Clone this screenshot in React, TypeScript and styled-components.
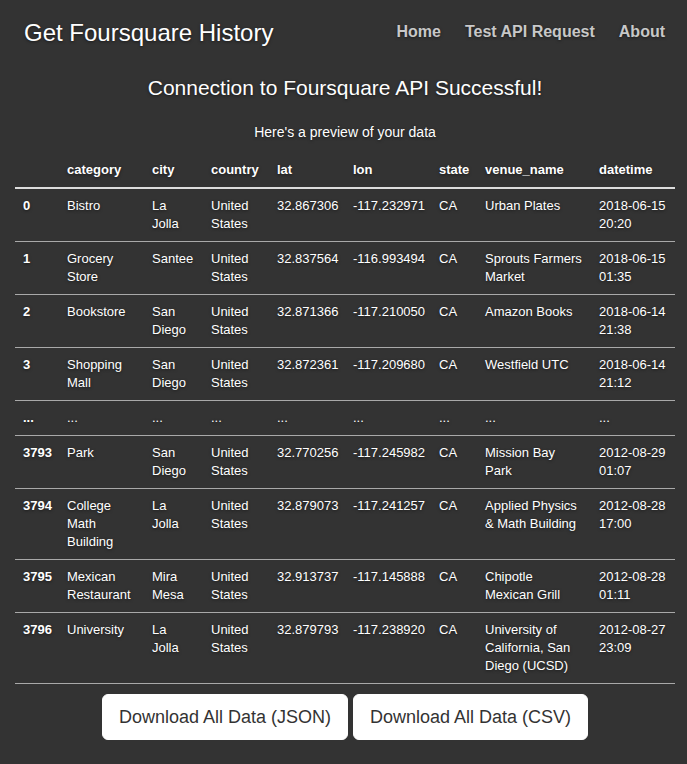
import React from "react";
import styled, { createGlobalStyle } from "styled-components";

const Global = createGlobalStyle`
  html, body { margin: 0; padding: 0; }
  body {
    background: #333333;
    color: #ffffff;
    font-family: "Liberation Sans", Arial, Helvetica, sans-serif;
    font-size: 14px;
    text-shadow: 0 1px 3px rgba(0, 0, 0, 0.5);
  }
`;

const Page = styled.div`
  min-height: 764px;
  display: flex;
  flex-direction: column;
`;

const Masthead = styled.header`
  display: flex;
  justify-content: space-between;
  align-items: flex-start;
  padding: 20px 22px 0 24px;
`;

const Brand = styled.h3`
  margin: 0;
  font-size: 24px;
  font-weight: 400;
  line-height: 26px;
  color: #ffffff;
`;

const Nav = styled.nav`
  display: flex;
  gap: 24px;
  padding-top: 2px;
`;

const NavLink = styled.a`
  font-size: 16px;
  font-weight: 700;
  line-height: 20px;
  color: rgba(255, 255, 255, 0.75);
  text-decoration: none;
  cursor: pointer;
`;

const Main = styled.main`
  display: flex;
  flex-direction: column;
  align-items: center;
  padding: 0 12px 0 15px;
`;

const Title = styled.h2`
  margin: 30px 0 0;
  font-size: 21px;
  font-weight: 400;
  line-height: 23px;
`;

const Lead = styled.p`
  margin: 23px 0 11px;
  font-size: 14px;
  line-height: 20px;
`;

const Table = styled.table`
  width: 660px;
  border-collapse: collapse;
  table-layout: fixed;
  font-size: 13px;
  line-height: 18px;
`;

const HeadCell = styled.th`
  text-align: left;
  font-weight: 700;
  padding: 8px;
  border-bottom: 2px solid #dddddd;
  vertical-align: bottom;
`;

const Row = styled.tr`
  border-bottom: 1px solid #a9a9a9;
`;

const Cell = styled.td<{ $index?: boolean }>`
  padding: 8px;
  vertical-align: top;
  font-weight: ${(p) => (p.$index ? 700 : 400)};
`;

const Actions = styled.div`
  display: flex;
  justify-content: center;
  gap: 5px;
  margin-top: 10px;
`;

const Button = styled.button`
  font-family: "Liberation Sans", Arial, Helvetica, sans-serif;
  font-size: 18px;
  line-height: 24px;
  padding: 10px 16px;
  background: #ffffff;
  color: #333333;
  border: 1px solid #ffffff;
  border-radius: 6px;
  text-shadow: none;
  cursor: pointer;
`;

const widths = [44, 85, 59, 66, 76, 86, 46, 114, 84];
const headers = ["", "category", "city", "country", "lat", "lon", "state", "venue_name", "datetime"];

const rows: string[][] = [
  ["0", "Bistro", "La Jolla", "United States", "32.867306", "-117.232971", "CA", "Urban Plates", "2018-06-15 20:20"],
  ["1", "Grocery Store", "Santee", "United States", "32.837564", "-116.993494", "CA", "Sprouts Farmers Market", "2018-06-15 01:35"],
  ["2", "Bookstore", "San Diego", "United States", "32.871366", "-117.210050", "CA", "Amazon Books", "2018-06-14 21:38"],
  ["3", "Shopping Mall", "San Diego", "United States", "32.872361", "-117.209680", "CA", "Westfield UTC", "2018-06-14 21:12"],
  ["...", "...", "...", "...", "...", "...", "...", "...", "..."],
  ["3793", "Park", "San Diego", "United States", "32.770256", "-117.245982", "CA", "Mission Bay Park", "2012-08-29 01:07"],
  ["3794", "College Math Building", "La Jolla", "United States", "32.879073", "-117.241257", "CA", "Applied Physics & Math Building", "2012-08-28 17:00"],
  ["3795", "Mexican Restaurant", "Mira Mesa", "United States", "32.913737", "-117.145888", "CA", "Chipotle Mexican Grill", "2012-08-28 01:11"],
  ["3796", "University", "La Jolla", "United States", "32.879793", "-117.238920", "CA", "University of California, San Diego (UCSD)", "2012-08-27 23:09"],
];

export default function App() {
  return (
    <Page>
      <Global />
      <Masthead>
        <Brand>Get Foursquare History</Brand>
        <Nav>
          <NavLink>Home</NavLink>
          <NavLink>Test API Request</NavLink>
          <NavLink>About</NavLink>
        </Nav>
      </Masthead>
      <Main>
        <Title>Connection to Foursquare API Successful!</Title>
        <Lead>Here's a preview of your data</Lead>
        <Table>
          <colgroup>
            {widths.map((w, i) => (
              <col key={i} style={{ width: w }} />
            ))}
          </colgroup>
          <thead>
            <tr>
              {headers.map((h, i) => (
                <HeadCell key={i}>{h}</HeadCell>
              ))}
            </tr>
          </thead>
          <tbody>
            {rows.map((r, ri) => (
              <Row key={ri}>
                {r.map((c, ci) => (
                  <Cell key={ci} $index={ci === 0}>
                    {c}
                  </Cell>
                ))}
              </Row>
            ))}
          </tbody>
        </Table>
        <Actions>
          <Button>Download All Data (JSON)</Button>
          <Button>Download All Data (CSV)</Button>
        </Actions>
      </Main>
    </Page>
  );
}
